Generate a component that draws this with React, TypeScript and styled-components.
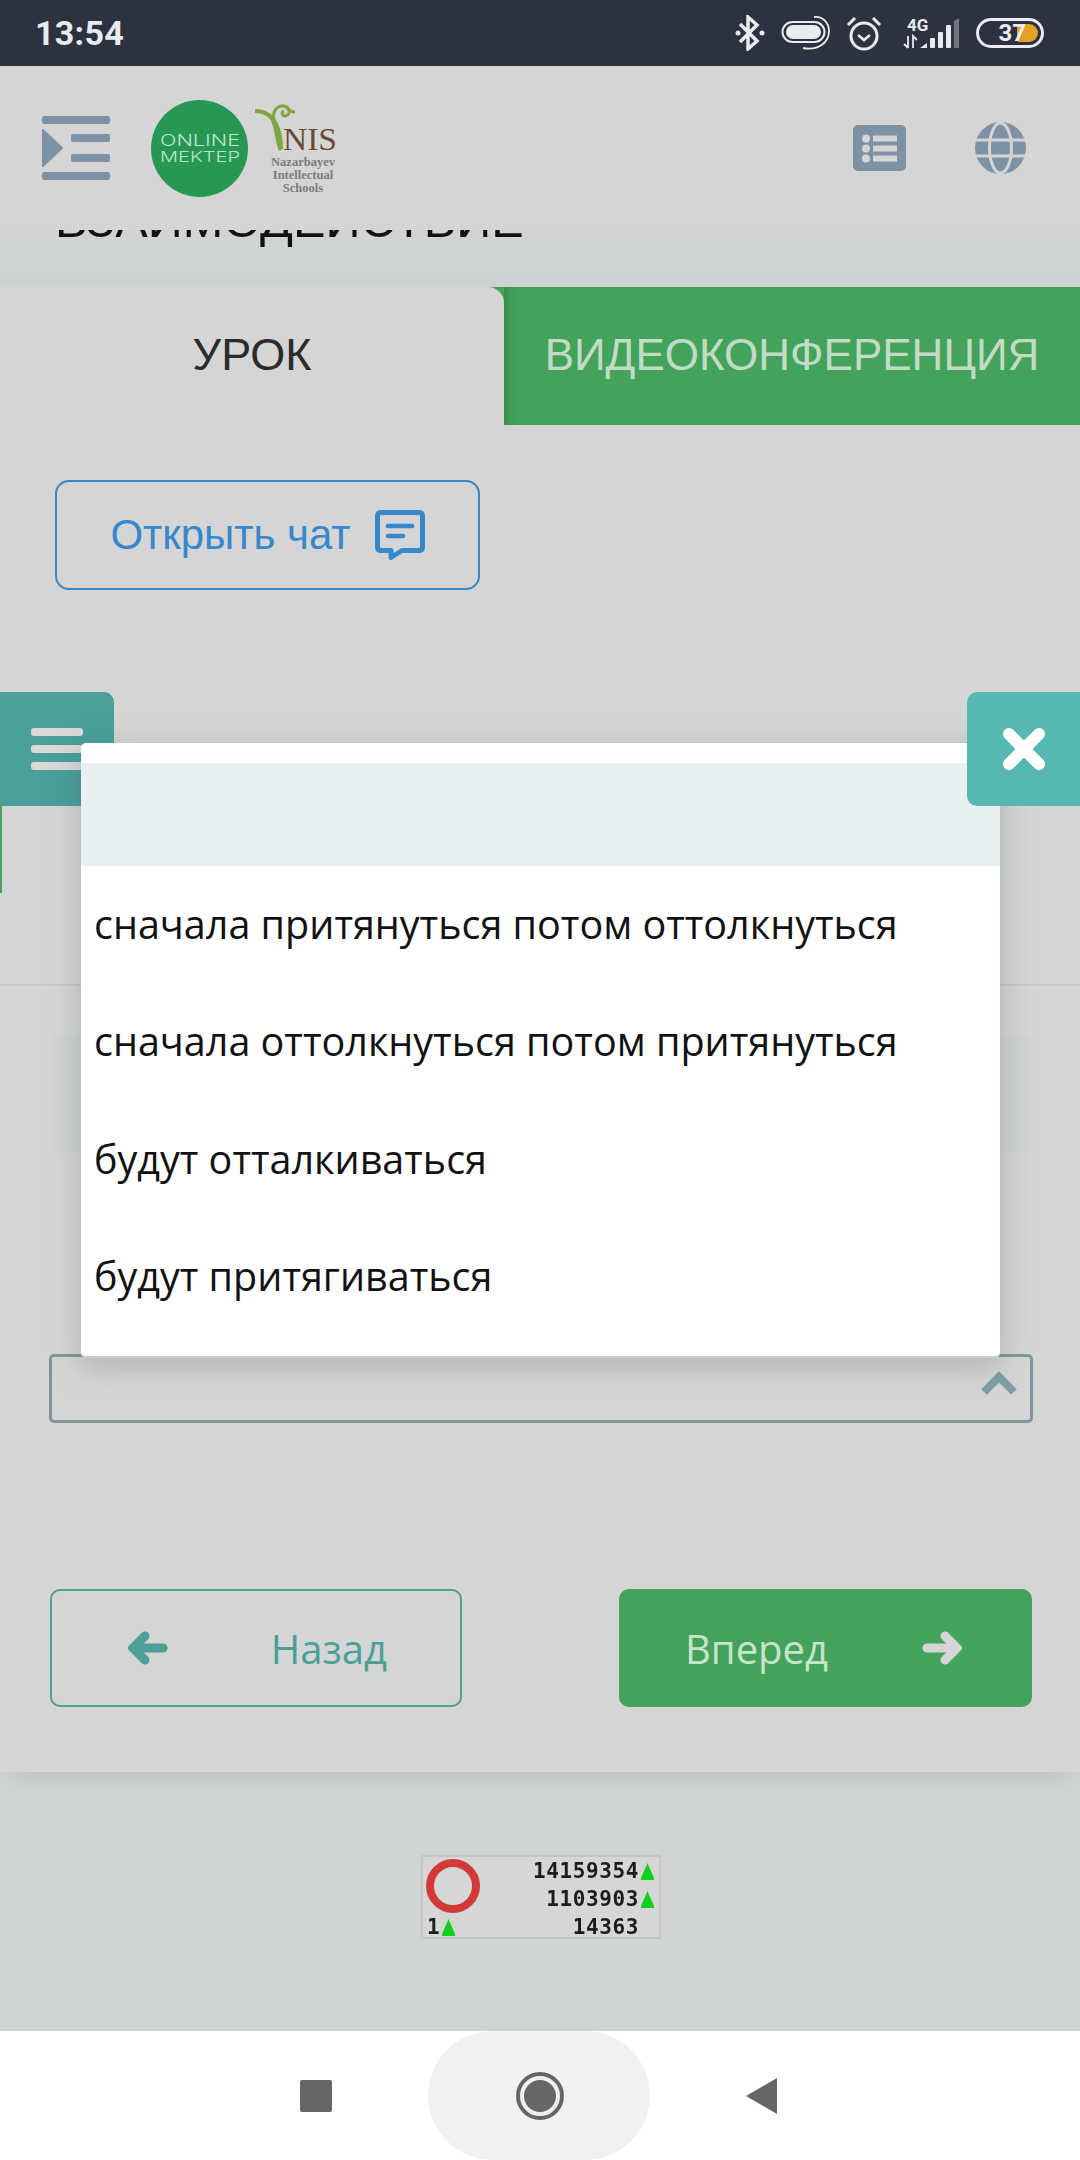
import React from 'react';
import styled, { createGlobalStyle } from 'styled-components';

const GlobalStyle = createGlobalStyle`
  html, body {
    margin: 0;
    padding: 0;
    background: #d5d5d5;
  }
  * {
    box-sizing: border-box;
  }
`;

const Page = styled.div`
  position: relative;
  width: 1080px;
  height: 2160px;
  overflow: hidden;
  display: flex;
  flex-direction: column;
  background: #d5d5d5;
  font-family: "Open Sans", sans-serif;
`;

const StatusBar = styled.div`
  height: 66px;
  flex: none;
  display: flex;
  align-items: center;
  padding: 0 36px 0 35px;
  background: #2c323f;
  color: #e9ebef;
`;

const Clock = styled.span`
  font-family: Roboto, sans-serif;
  font-weight: 700;
  font-size: 34px;
  letter-spacing: 0.3px;
  margin-right: auto;
`;

const StatusIcons = styled.div`
  display: flex;
  align-items: center;
`;

const StatusIcon = styled.svg<{ $gap?: number }>`
  display: block;
  margin-left: ${(p) => p.$gap ?? 0}px;
`;

const BatteryShell = styled.div`
  position: relative;
  width: 68px;
  height: 30px;
  margin-left: 16px;
  border: 3px solid #e9ebef;
  border-radius: 15px;
  font-family: Roboto, sans-serif;
  font-weight: 700;
  font-size: 24px;
  line-height: 24px;
  text-align: right;
  padding-right: 15px;
`;

const BatteryFill = styled.div`
  position: absolute;
  top: 3px;
  right: 3px;
  width: 21px;
  height: 18px;
  border-radius: 2px 9px 9px 2px;
  background: #e6a028;
`;

const BatteryLabel = styled.span`
  position: relative;
`;

const Header = styled.header`
  height: 164px;
  flex: none;
  display: flex;
  align-items: center;
  padding: 0 54px 0 42px;
  background: #d5d5d5;
  position: relative;
  z-index: 1;
`;

const HeaderLogos = styled.div`
  display: flex;
  align-items: center;
  margin-left: 41px;
  gap: 6px;
  margin-right: auto;
`;

const HeaderActions = styled.div`
  display: flex;
  align-items: center;
  gap: 69px;
`;

const TitleStrip = styled.div`
  height: 57px;
  flex: none;
  overflow: hidden;
  padding-left: 55px;
  background: linear-gradient(#d0d4d5, #cdd1d2);
`;

const PageTitle = styled.h1`
  margin: -40px 0 0;
  font-family: "Liberation Sans", sans-serif;
  font-weight: 400;
  font-size: 48.7px;
  line-height: 60px;
  color: #111;
`;

const Tabs = styled.div`
  height: 138px;
  flex: none;
  display: flex;
  background: #43a35a;
`;

const Tab = styled.div<{ $active?: boolean }>`
  display: flex;
  align-items: center;
  justify-content: center;
  padding-bottom: 2px;
  font-family: "Liberation Sans", sans-serif;
  font-size: ${(p) => (p.$active ? '45px' : '44px')};
  width: ${(p) => (p.$active ? '504px' : '576px')};
  color: ${(p) => (p.$active ? '#2b2b2b' : '#c2dbc6')};
  background: ${(p) => (p.$active ? '#d5d5d5' : 'transparent')};
  border-top-right-radius: ${(p) => (p.$active ? '16px' : '0')};
  box-shadow: ${(p) => (p.$active ? 'none' : 'inset 12px 0 12px -10px rgba(0, 0, 0, 0.2)')};
`;

const Content = styled.main`
  flex: 1;
  display: flex;
  flex-direction: column;
  background: #d5d5d5;
  box-shadow: 0 16px 20px -12px rgba(0, 0, 0, 0.1);
  position: relative;
`;

const ChatRow = styled.div`
  padding: 55px 0 0 55px;
  height: 559px;
  flex: none;
`;

const ChatButton = styled.button`
  width: 425px;
  height: 110px;
  display: flex;
  align-items: center;
  justify-content: center;
  gap: 24px;
  padding: 0;
  background: transparent;
  border: 2px solid #3a87c6;
  border-radius: 14px;
  color: #3688cb;
  font-family: "Liberation Sans", sans-serif;
  font-size: 42px;
`;

const Divider = styled.div`
  height: 2px;
  flex: none;
  background: #c8c8c8;
`;

const QuestionBox = styled.div`
  height: 117px;
  flex: none;
  margin: 50px 48px 0 50px;
  border-radius: 10px;
  background: #d0d2d3;
`;

const SelectBox = styled.div`
  height: 69px;
  flex: none;
  margin: 201px 47px 0 49px;
  display: flex;
  align-items: center;
  justify-content: flex-end;
  padding: 0 13px 10px 0;
  border: 3px solid #7f979c;
  border-radius: 5px;
`;

const Pager = styled.div`
  display: flex;
  justify-content: space-between;
  margin: 166px 48px 0 50px;
`;

const PagerButton = styled.button<{ $primary?: boolean }>`
  width: ${(p) => (p.$primary ? '413px' : '412px')};
  height: 118px;
  display: flex;
  align-items: center;
  justify-content: space-between;
  padding: ${(p) => (p.$primary ? '0 68px 0 64px' : '0 73px 0 76px')};
  font-family: "Open Sans", sans-serif;
  font-size: 40px;
  border-radius: 10px;
  border: 2px solid ${(p) => (p.$primary ? '#43a35a' : '#4a9f99')};
  background: ${(p) => (p.$primary ? '#43a35a' : 'transparent')};
  color: ${(p) => (p.$primary ? '#c6e3cb' : '#4a9f99')};
`;

const CounterArea = styled.section`
  height: 259px;
  flex: none;
  display: flex;
  align-items: center;
  justify-content: center;
  padding: 0 0 9px 2px;
  background: #cfd3d4;
`;

const Counter = styled.div`
  width: 240px;
  height: 84px;
  display: grid;
  grid-template-columns: 60px 1fr;
  padding: 1px 4px 1px 2px;
  background: #d6d6d6;
  border: 2px solid #c4c6c6;
  filter: blur(0.5px);
  position: relative;
`;

const CounterLeft = styled.div`
  display: flex;
  flex-direction: column;
  justify-content: space-between;
`;

const CounterRows = styled.div`
  display: flex;
  flex-direction: column;
  align-items: flex-end;
  justify-content: space-between;
`;

const CounterRow = styled.div<{ $noMark?: boolean }>`
  display: flex;
  align-items: center;
  gap: 1px;
  padding-left: ${(p) => (p.$noMark ? '0' : '2px')};
  padding-right: ${(p) => (p.$noMark ? '16px' : '0')};
  font-family: "DejaVu Sans Mono", monospace;
  font-weight: 700;
  font-size: 21px;
  line-height: 26px;
  letter-spacing: 0.6px;
  color: #1c1c1c;
`;

const NavBar = styled.nav`
  height: 129px;
  flex: none;
  display: grid;
  grid-template-columns: 428px 222px 1fr;
  background: #fff;
`;

const NavSide = styled.div<{ $align: string; $inset: number }>`
  display: flex;
  align-items: center;
  justify-content: ${(p) => p.$align};
  padding: 0 ${(p) => p.$inset}px;
`;

const NavHome = styled.div`
  display: flex;
  align-items: center;
  justify-content: center;
  padding-left: 2px;
  border-radius: 70px;
  background: #f1f1f1;
`;

const NavSquare = styled.div`
  width: 32px;
  height: 32px;
  border-radius: 2px;
  background: #666;
`;

const SideTab = styled.div`
  position: absolute;
  top: 692px;
  left: 0;
  width: 114px;
  height: 114px;
  display: flex;
  flex-direction: column;
  justify-content: center;
  gap: 9px;
  padding-left: 31px;
  background: #4a9f99;
  border-top-right-radius: 10px;
  z-index: 2;

  &::after {
    content: '';
    position: absolute;
    left: 0;
    top: 114px;
    width: 2px;
    height: 87px;
    background: #43a35a;
  }
`;

const SideTabBar = styled.span`
  width: 52px;
  height: 8px;
  border-radius: 3px;
  background: #d8dada;
`;

const CloseTab = styled.div`
  position: absolute;
  top: 692px;
  right: 0;
  width: 113px;
  height: 114px;
  display: flex;
  align-items: center;
  justify-content: center;
  background: #56b8b1;
  border-radius: 10px 0 0 10px;
  z-index: 4;
`;

const Modal = styled.div`
  position: absolute;
  top: 743px;
  left: 81px;
  width: 919px;
  height: 615px;
  padding-top: 20px;
  background: #fff;
  border-radius: 5px;
  border-bottom: 2px solid #c3d0d2;
  box-shadow: 0 8px 32px rgba(60, 80, 80, 0.28);
  z-index: 3;
`;

const OptionSelected = styled.div`
  height: 103px;
  background: #e9f0f3;
`;

const Option = styled.div`
  height: 117.5px;
  display: flex;
  align-items: center;
  padding-left: 13px;
  font-size: 39.5px;
  color: #111;
`;

const OptionList = styled.div`
  margin-top: -1px;
`;

const options = [
  'сначала притянуться потом оттолкнуться',
  'сначала оттолкнуться потом притянуться',
  'будут отталкиваться',
  'будут притягиваться',
];

const counterRows = [
  { value: '14159354', mark: true },
  { value: '1103903', mark: true },
  { value: '14363', mark: false },
];

function GreenMark() {
  return (
    <svg width="15" height="17" viewBox="0 0 15 17">
      <path d="M7.5 0 L10.5 7 L14 15 L14 17 L1 17 L1 15 L4.5 7 Z" fill="#10cf1a" />
    </svg>
  );
}

function OnlineLogo() {
  return (
    <svg width="97" height="97" viewBox="0 0 97 97">
      <circle cx="48.5" cy="48.5" r="48.5" fill="#279853" />
      <text x="9" y="46" fontFamily="Inter, sans-serif" fontWeight="300" fontSize="16" fill="#bfe3cc" textLength="80" lengthAdjust="spacingAndGlyphs">ONLINE</text>
      <text x="9" y="62" fontFamily="Inter, sans-serif" fontWeight="300" fontSize="15" fill="#bfe3cc" textLength="80" lengthAdjust="spacingAndGlyphs">MEKTEP</text>
    </svg>
  );
}

function NisLogo() {
  return (
    <svg width="84" height="92" viewBox="0 0 84 92">
      <path d="M27 47 C27 32 24 22 16 14 C11 10 6 9 1 9 C8 9 14 11 19 17" fill="none" stroke="#7fa63f" strokeWidth="4" />
      <path d="M26 48 C22 36 22 24 17 15 C22 24 28 34 26 48 Z" fill="#7fa63f" stroke="#7fa63f" strokeWidth="3" />
      <path d="M22 22 C16 12 22 3 30 4 C36 5 37 13 31 14 C28 14 27 10 30 9 M33 5 C35 9 38 10 41 10" fill="none" stroke="#7fa63f" strokeWidth="3" />
      <text x="29" y="48" fontFamily="'Liberation Serif', serif" fontSize="31" fill="#6b4a35" textLength="54" lengthAdjust="spacingAndGlyphs">NIS</text>
      <text x="49" y="64" textAnchor="middle" fontFamily="'Liberation Serif', serif" fontWeight="700" fontSize="12.5" fill="#7b7b7b">Nazarbayev</text>
      <text x="49" y="77" textAnchor="middle" fontFamily="'Liberation Serif', serif" fontWeight="700" fontSize="12.5" fill="#7b7b7b">Intellectual</text>
      <text x="49" y="90" textAnchor="middle" fontFamily="'Liberation Serif', serif" fontWeight="700" fontSize="12.5" fill="#7b7b7b">Schools</text>
    </svg>
  );
}

export default function App() {
  return (
    <Page>
      <GlobalStyle />
      <StatusBar>
        <Clock>13:54</Clock>
        <StatusIcons>
          <StatusIcon width="30" height="36" viewBox="0 0 30 36">
            <path d="M5 9 L22 26 L13 34 V2 L22 10 L5 27" fill="none" stroke="#e9ebef" strokeWidth="3.5" />
            <circle cx="3" cy="18" r="2.5" fill="#e9ebef" />
            <circle cx="27" cy="18" r="2.5" fill="#e9ebef" />
          </StatusIcon>
          <StatusIcon $gap={16} width="50" height="36" viewBox="0 0 50 36">
            <rect x="1.5" y="7" width="42" height="20" rx="10" fill="none" stroke="#e9ebef" strokeWidth="2" />
            <rect x="5" y="10" width="35" height="14" rx="7" fill="#e9ebef" />
            <path d="M33 2 C42 1 48 8 48 16 C48 27 38 36 22 33" fill="none" stroke="#e9ebef" strokeWidth="1.8" />
          </StatusIcon>
          <StatusIcon $gap={15} width="36" height="36" viewBox="0 0 36 36">
            <circle cx="18" cy="21" r="13" fill="none" stroke="#e9ebef" strokeWidth="3" />
            <path d="M12 20 L18 25 L24 20" fill="none" stroke="#e9ebef" strokeWidth="2.5" />
            <path d="M2 10 L9 3 M34 10 L27 3" fill="none" stroke="#e9ebef" strokeWidth="3" />
          </StatusIcon>
          <StatusIcon $gap={20} width="58" height="34" viewBox="0 0 58 34">
            <text x="5" y="15" fontFamily="Roboto, sans-serif" fontWeight="700" fontSize="17" fill="#e9ebef">4G</text>
            <path d="M6 20 V32 M2 28 L6 32 M11 32 V20 L15 24" fill="none" stroke="#e9ebef" strokeWidth="1.8" />
            <path d="M18 32 L25 27 V32 Z" fill="#e9ebef" />
            <rect x="28" y="22" width="5" height="10" rx="1" fill="#e9ebef" />
            <rect x="36" y="16" width="5" height="16" rx="1" fill="#e9ebef" />
            <rect x="44" y="9" width="5" height="23" rx="1" fill="#e9ebef" />
            <path d="M52 5 L57 2 V32 H52 Z" fill="#71757e" />
          </StatusIcon>
          <BatteryShell>
            <BatteryFill />
            <BatteryLabel>37</BatteryLabel>
          </BatteryShell>
        </StatusIcons>
      </StatusBar>

      <Header>
        <svg width="68" height="64" viewBox="0 0 68 64">
          <rect x="0" y="0" width="68" height="8" rx="2" fill="#7d92a5" />
          <rect x="29" y="18" width="39" height="8" rx="2" fill="#7d92a5" />
          <rect x="29" y="38" width="39" height="8" rx="2" fill="#7d92a5" />
          <rect x="0" y="56" width="68" height="8" rx="2" fill="#7d92a5" />
          <path d="M1 14 L20 32 L1 50 Z" fill="#7d92a5" stroke="#7d92a5" strokeWidth="2" strokeLinejoin="round" />
        </svg>
        <HeaderLogos>
          <OnlineLogo />
          <NisLogo />
        </HeaderLogos>
        <HeaderActions>
          <svg width="53" height="46" viewBox="0 0 53 46">
            <rect width="53" height="46" rx="5" fill="#7d92a5" />
            <circle cx="13" cy="13.5" r="4" fill="#d5d5d5" />
            <circle cx="13" cy="23.5" r="4" fill="#d5d5d5" />
            <circle cx="13" cy="33.5" r="4" fill="#d5d5d5" />
            <rect x="20" y="10.5" width="24" height="6" fill="#d5d5d5" />
            <rect x="20" y="20.5" width="24" height="6" fill="#d5d5d5" />
            <rect x="20" y="30.5" width="24" height="6" fill="#d5d5d5" />
          </svg>
          <svg width="51" height="52" viewBox="0 0 51 52">
            <ellipse cx="25.5" cy="26" rx="25.5" ry="26" fill="#7d92a5" />
            <ellipse cx="25.5" cy="26" rx="11" ry="25" fill="none" stroke="#d5d5d5" strokeWidth="3" />
            <path d="M0 18 H51 M0 34 H51" stroke="#d5d5d5" strokeWidth="3" />
          </svg>
        </HeaderActions>
      </Header>

      <TitleStrip>
        <PageTitle>ВЗАИМОДЕЙСТВИЕ</PageTitle>
      </TitleStrip>

      <Tabs>
        <Tab $active>УРОК</Tab>
        <Tab>ВИДЕОКОНФЕРЕНЦИЯ</Tab>
      </Tabs>

      <Content>
        <ChatRow>
          <ChatButton>
            Открыть чат
            <svg width="50" height="50" viewBox="0 0 50 50">
              <path d="M6 2.5 H44 Q47.5 2.5 47.5 6 V37 Q47.5 40.5 44 40.5 H27 L16 47.5 V40.5 H6 Q2.5 40.5 2.5 37 V6 Q2.5 2.5 6 2.5 Z" fill="none" stroke="#3688cb" strokeWidth="5" strokeLinejoin="round" />
              <path d="M13 16 H37 M13 26 H28" stroke="#3688cb" strokeWidth="4.5" strokeLinecap="round" />
            </svg>
          </ChatButton>
        </ChatRow>
        <Divider />
        <QuestionBox />
        <SelectBox>
          <svg width="36" height="25" viewBox="0 0 36 25">
            <path d="M3 21 L18 6 L33 21" fill="none" stroke="#7f9fa5" strokeWidth="8" />
          </svg>
        </SelectBox>
        <Pager>
          <PagerButton>
            <svg width="40" height="34" viewBox="0 0 40 34">
              <path d="M17 5 L5 17 L17 29 M7 17 H35" fill="none" stroke="#4a9f99" strokeWidth="9" strokeLinecap="round" />
            </svg>
            Назад
          </PagerButton>
          <PagerButton $primary>
            Вперед
            <svg width="40" height="34" viewBox="0 0 40 34">
              <path d="M23 5 L35 17 L23 29 M33 17 H5" fill="none" stroke="#d5d5d5" strokeWidth="9" strokeLinecap="round" />
            </svg>
          </PagerButton>
        </Pager>
      </Content>

      <CounterArea>
        <Counter>
          <CounterLeft>
            <svg width="56" height="56" viewBox="0 0 56 56">
              <circle cx="28" cy="28" r="23" fill="none" stroke="#d23a3a" strokeWidth="8" />
            </svg>
            <CounterRow>1<GreenMark /></CounterRow>
          </CounterLeft>
          <CounterRows>
            {counterRows.map((row) => (
              <CounterRow key={row.value} $noMark={!row.mark}>
                {row.value}
                {row.mark && <GreenMark />}
              </CounterRow>
            ))}
          </CounterRows>
        </Counter>
      </CounterArea>

      <NavBar>
        <NavSide $align="flex-end" $inset={96}>
          <NavSquare />
        </NavSide>
        <NavHome>
          <svg width="48" height="48" viewBox="0 0 48 48">
            <circle cx="24" cy="24" r="22" fill="none" stroke="#666" strokeWidth="4" />
            <circle cx="24" cy="24" r="16" fill="#666" />
          </svg>
        </NavHome>
        <NavSide $align="flex-start" $inset={95}>
          <svg width="33" height="36" viewBox="0 0 33 36">
            <path d="M1 18 L32 0 V36 Z" fill="#666" strokeLinejoin="round" />
          </svg>
        </NavSide>
      </NavBar>

      <SideTab>
        <SideTabBar />
        <SideTabBar />
        <SideTabBar />
      </SideTab>

      <CloseTab>
        <svg width="44" height="42" viewBox="0 0 44 42">
          <path d="M7 6 L37 36 M37 6 L7 36" stroke="#fff" strokeWidth="12" strokeLinecap="round" />
        </svg>
      </CloseTab>

      <Modal>
        <OptionSelected />
        <OptionList>
          {options.map((text) => (
            <Option key={text}>{text}</Option>
          ))}
        </OptionList>
      </Modal>
    </Page>
  );
}
